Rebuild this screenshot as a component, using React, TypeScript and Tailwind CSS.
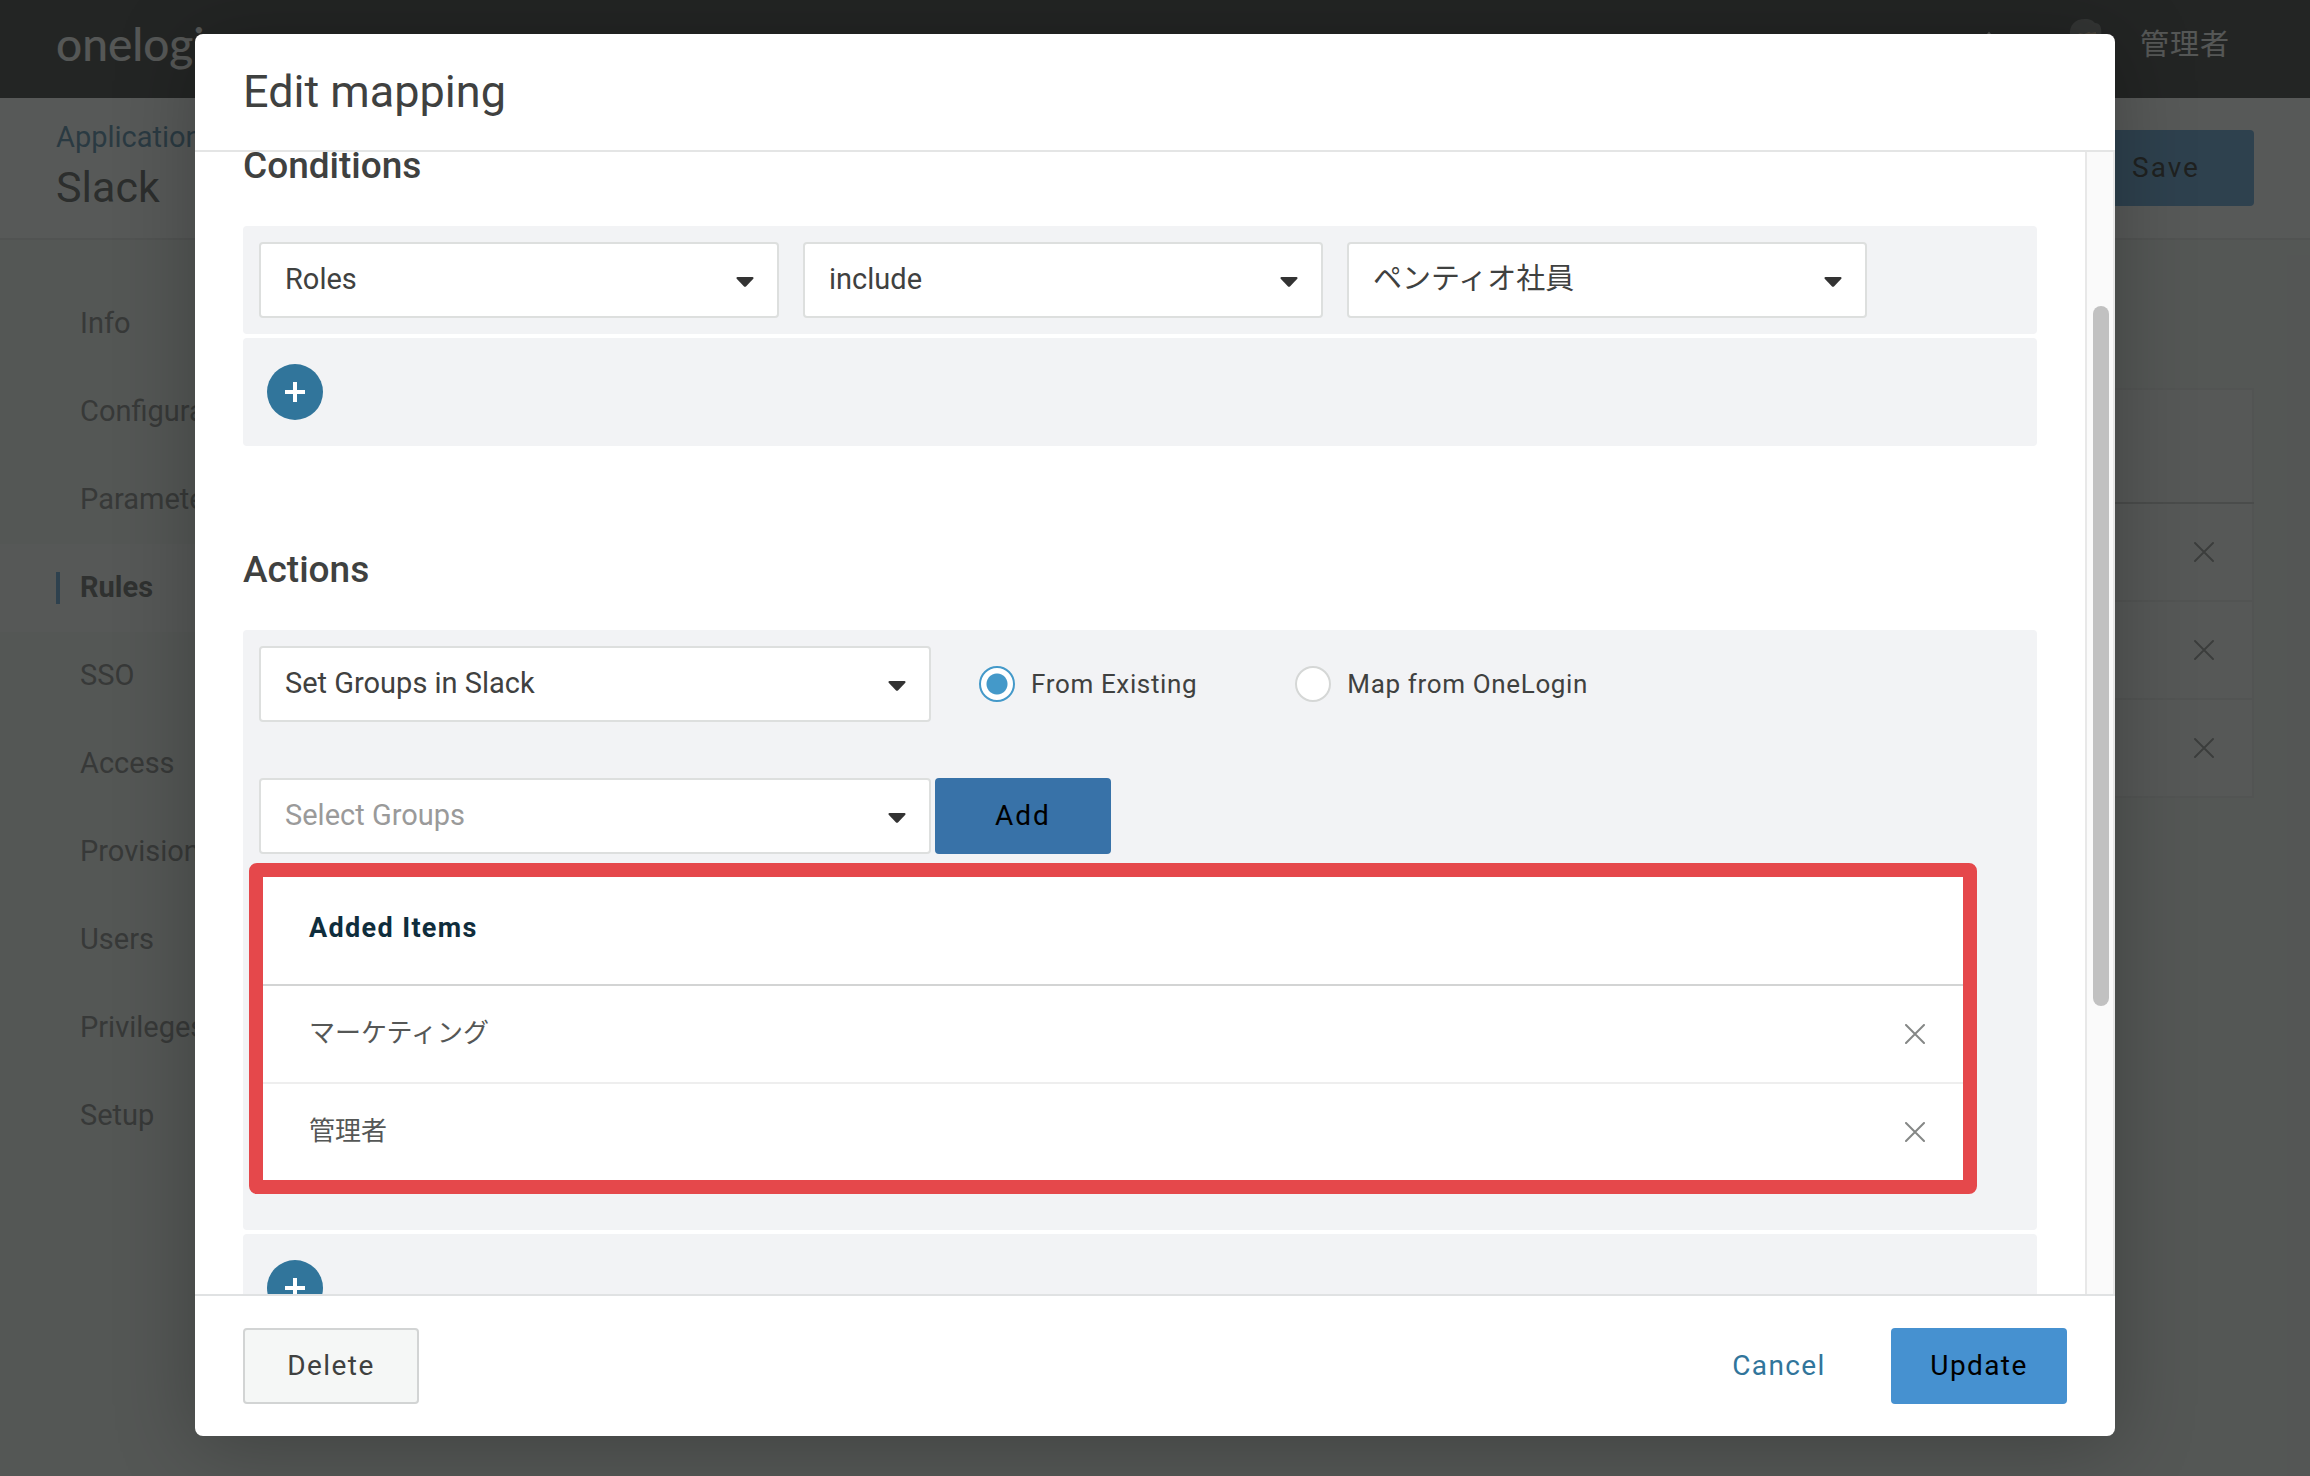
import type { ReactNode } from "react"

const navItems = ["Info", "Configuration", "Parameters", "Rules", "SSO", "Access", "Provisioning", "Users", "Privileges", "Setup"]

const addedItems = ["マーケティング", "管理者"]

function CloseIcon() {
  return (
    <svg className="size-5" viewBox="0 0 20 20" fill="none" stroke="currentColor" strokeWidth="2" strokeLinecap="round">
      <path d="M1 1 19 19M19 1 1 19" />
    </svg>
  )
}

function Select({ label, value, className, placeholder }: { label: string; value: string; className: string; placeholder?: boolean }) {
  return (
    <div className={`relative ${className}`}>
      <select
        aria-label={label}
        className={`h-[76px] w-full appearance-none rounded border-2 border-[#dddfde] bg-white pl-6 pr-16 text-[29px] ${placeholder ? "text-[#9a9a9a]" : "text-[#3f4140]"}`}
      >
        <option>{value}</option>
      </select>
      <svg className="pointer-events-none absolute right-[25px] top-[35px] h-[10px] w-[18px]" viewBox="0 0 18 10">
        <path d="M1.5 0h15q1.5 .3 .8 1.8L10.2 9.3q-1.2 1-2.4 0L.7 1.8Q0 .3 1.5 0Z" fill="#333" />
      </svg>
    </div>
  )
}

function Panel({ children, className }: { children: ReactNode; className: string }) {
  return <div className={`rounded bg-[#f2f3f5] ${className}`}>{children}</div>
}

function AddRow({ label }: { label: string }) {
  return (
    <Panel className="px-6 py-[26px]">
      <button aria-label={label} className="flex size-14 items-center justify-center rounded-full bg-[#31759b] text-white">
        <svg className="size-5" viewBox="0 0 20 20" fill="none" stroke="currentColor" strokeWidth="4">
          <path d="M10 0v20M0 10h20" />
        </svg>
      </button>
    </Panel>
  )
}

function Radio({ label, checked }: { label: string; checked?: boolean }) {
  return (
    <label className="flex items-center gap-4 text-[26px] tracking-wide">
      <input
        type="radio"
        name="source"
        defaultChecked={checked}
        className="size-9 appearance-none rounded-full border-2 border-[#d5d7d6] bg-white checked:border-[#4499c9] checked:bg-[radial-gradient(circle,#4499c9_10px,white_11px)]"
      />
      {label}
    </label>
  )
}

function Background() {
  return (
    <div className="flex h-full flex-col bg-[#f2f3f2]">
      <header className="flex h-[98px] shrink-0 items-center justify-between bg-[#151515] px-14">
        <span className="pb-3 font-['Lato'] text-[46px] font-medium text-[#f5f5f5]">onelogin</span>
        <div className="flex items-center pb-[6px] pr-6">
          <svg className="mr-[58px] h-8 w-6" viewBox="0 0 24 32" fill="none" stroke="#f5f5f5" strokeWidth="3">
            <path d="M3 14 12 4l9 10v14H3Z" />
          </svg>
          <svg className="mr-[27px] size-[54px]" viewBox="0 0 54 54">
            <ellipse cx="27" cy="22" rx="12" ry="16" fill="#c8a47c" />
            <path d="M11 17C10 6 16 0 26 0c6 0 8 2 10 4 6 0 7 6 6 14l-3-1-2-4-5 1-2-1-5 2-4-1-5 3-2 2Z" fill="#5c5c5c" />
          </svg>
          <span className="text-[29px] tracking-[1px] text-[#f5f5f5]">管理者</span>
        </div>
      </header>
      <div className="flex h-[142px] shrink-0 items-start justify-between border-b-2 border-[#e2e2e2] bg-white px-14">
        <div className="flex flex-col pt-[23px]">
          <a href="#" className="text-[29px] leading-8 text-[#357399]">Applications</a>
          <h1 className="mt-2 text-[43px] leading-[52px] text-[#3b3d3c]">Slack</h1>
        </div>
        <button className="mt-8 h-[76px] w-44 rounded bg-[#4691d0] text-[28px] tracking-[2px] text-black">Save</button>
      </div>
      <div className="flex flex-1">
        <nav className="w-[320px] pt-10">
          {navItems.map((item) => (
            <a
              key={item}
              href="#"
              className={`flex h-[88px] items-center text-[29px] ${item === "Rules" ? "bg-[#f9f9f9] font-bold text-[#4b4b4b]" : "text-[#6e6e6e]"}`}
            >
              <span className={`ml-14 mr-5 h-8 w-1 ${item === "Rules" ? "bg-[#4691d0]" : ""}`} />
              {item}
            </a>
          ))}
        </nav>
        <main className="flex-1 pr-14 pt-[148px]">
          <table className="w-full border-2 border-[#e8e8e8] bg-[#fbfbfb]">
            <thead>
              <tr className="h-[114px] border-b-2 border-[#c5c5c5]">
                <th />
              </tr>
            </thead>
            <tbody>
              {[1, 2, 3].map((row) => (
                <tr key={row} className="h-[98px] border-b-2 border-[#e8e8e8]">
                  <td className="pr-[38px]">
                    <button aria-label="Remove rule" className="ml-auto block text-[#828282]">
                      <CloseIcon />
                    </button>
                  </td>
                </tr>
              ))}
            </tbody>
          </table>
        </main>
      </div>
    </div>
  )
}

export default function App() {
  return (
    <div className="relative h-screen overflow-hidden font-['Roboto','Noto_Sans_CJK_JP',sans-serif]">
      <Background />
      <div className="absolute inset-0 flex justify-center bg-[#282a29]/78 pb-10 pt-[34px]">
        <div
          role="dialog"
          aria-labelledby="dialog-title"
          className="flex w-full max-w-[1920px] flex-col overflow-hidden rounded-lg bg-white text-[28px] text-[#3f4140] shadow-[0_8px_80px_rgba(0,0,0,0.25)]"
        >
          <header className="flex h-[118px] shrink-0 items-center border-b-2 border-[#e4e5e5] px-12">
            <h2 id="dialog-title" className="text-[45px]">Edit mapping</h2>
          </header>

          <div className="flex min-h-0 flex-1">
            <div className="min-w-0 flex-1 overflow-hidden px-12">
              {/* body is scrolled a little past the top of the section */}
              <section className="-mt-[6px]">
                <h3 className="mb-10 text-[37px] font-medium leading-10">Conditions</h3>
                <div className="flex flex-col gap-1">
                  <Panel className="flex gap-6 p-4">
                    <Select label="Condition" value="Roles" className="w-[520px]" />
                    <Select label="Operator" value="include" className="w-[520px]" />
                    <Select label="Value" value="ペンティオ社員" className="w-[520px]" />
                  </Panel>
                  <AddRow label="Add condition" />
                </div>
              </section>

              <section className="mt-[104px]">
                <h3 className="mb-10 text-[37px] font-medium leading-10">Actions</h3>
                <div className="flex flex-col gap-1">
                  <Panel className="px-4 pb-12 pt-4">
                    <div className="flex items-center">
                      <Select label="Action" value="Set Groups in Slack" className="w-[672px]" />
                      <div className="ml-12 flex gap-[98px]">
                        <Radio label="From Existing" checked />
                        <Radio label="Map from OneLogin" />
                      </div>
                    </div>
                    <div className="mt-14 flex gap-1">
                      <Select label="Groups" value="Select Groups" className="w-[672px]" placeholder />
                      <button className="h-[76px] w-44 rounded bg-[#3872a8] tracking-[2px] text-black">Add</button>
                    </div>
                    <div className="relative mr-[54px] mt-[17px]">
                      <table className="w-full bg-white text-left">
                        <thead>
                          <tr className="h-[114px] border-b-2 border-[#d3d4d4]">
                            <th colSpan={2} className="pl-[50px] pt-[2px] text-[27px] font-bold tracking-wider text-[#0f2d3c]">Added Items</th>
                          </tr>
                        </thead>
                        <tbody>
                          {addedItems.map((item) => (
                            <tr key={item} className="h-[98px] border-b-2 border-[#eeeeee] text-[26px] text-[#555756]">
                              <td className="pb-[2px] pl-[50px]">{item}</td>
                              <td className="pr-[42px]">
                                <button aria-label={`Remove ${item}`} className="ml-auto block text-[#858786]">
                                  <CloseIcon />
                                </button>
                              </td>
                            </tr>
                          ))}
                        </tbody>
                      </table>
                      <div className="pointer-events-none absolute -bottom-3 -left-[10px] -right-[10px] -top-2 rounded-lg border-[14px] border-[#e5484b]" />
                    </div>
                  </Panel>
                  <AddRow label="Add action" />
                </div>
              </section>
            </div>
            <div className="w-[30px] shrink-0 border-x-2 border-[#e8e8e8] bg-[#fafafa] px-[6px] pt-[154px]">
              <div className="h-[700px] w-4 rounded-full bg-[#c1c1c1]" />
            </div>
          </div>

          <footer className="flex shrink-0 items-center border-t-2 border-[#e0e2e3] px-12 py-8">
            <button className="h-[76px] w-44 rounded border-2 border-[#d2d4d4] bg-[#f5f7f6] tracking-wider">Delete</button>
            <button className="ml-auto mr-6 h-[76px] w-44 rounded tracking-wider text-[#31759b]">Cancel</button>
            <button className="h-[76px] w-44 rounded bg-[#4691d0] tracking-wider text-black">Update</button>
          </footer>
        </div>
      </div>
    </div>
  )
}
